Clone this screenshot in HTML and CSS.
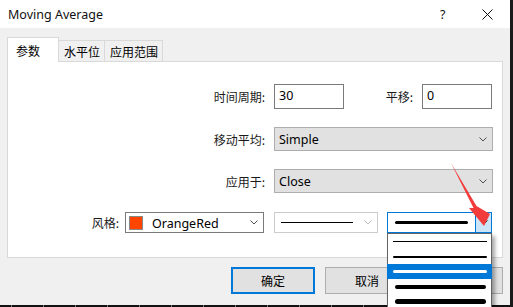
FILE: index.html
```html
<!DOCTYPE html>
<html>
<head>
<meta charset="utf-8">
<link rel="stylesheet" href="styles.css">
</head>
<body>
<div class="win">
  <div class="titlebar">
    <span class="title">Moving Average</span>
    <span class="help">?</span>
    <span class="close"><svg width="11" height="11" viewBox="0 0 11 11"><path d="M0.5 0.5 L10.5 10.5 M10.5 0.5 L0.5 10.5" stroke="#111" stroke-width="1" fill="none"/></svg></span>
  </div>
  <div class="body">
    <div class="tabs">
      <div class="tab active">参数</div>
      <div class="tab">水平位</div>
      <div class="tab">应用范围</div>
    </div>
    <div class="panel">
      <div class="row r1">
        <label class="lbl">时间周期:</label>
        <div class="input">30</div>
        <label class="lbl lbl2">平移:</label>
        <div class="input">0</div>
      </div>
      <div class="row r2">
        <label class="lbl">移动平均:</label>
        <div class="select"><span>Simple</span><svg class="chev" width="8" height="5" viewBox="0 0 8 5"><polyline points="0.5,0.5 4,4 7.5,0.5" fill="none" stroke="#505050" stroke-width="1"/></svg></div>
      </div>
      <div class="row r3">
        <label class="lbl">应用于:</label>
        <div class="select"><span>Close</span><svg class="chev" width="8" height="5" viewBox="0 0 8 5"><polyline points="0.5,0.5 4,4 7.5,0.5" fill="none" stroke="#505050" stroke-width="1"/></svg></div>
      </div>
      <div class="row r4">
        <label class="lbl lbl-style">风格:</label>
        <div class="combo color">
          <span class="swatch"></span><span class="ctext">OrangeRed</span>
          <svg class="chev" width="8" height="5" viewBox="0 0 8 5"><polyline points="0.5,0.5 4,4 7.5,0.5" fill="none" stroke="#505050" stroke-width="1"/></svg>
        </div>
        <div class="combo linesel">
          <span class="line l1"></span>
          <svg class="chev" width="8" height="5" viewBox="0 0 8 5"><polyline points="0.5,0.5 4,4 7.5,0.5" fill="none" stroke="#b4b4b4" stroke-width="1"/></svg>
        </div>
        <div class="combo widthsel">
          <span class="wline"><span class="line l3"></span></span>
          <span class="dbtn"><svg width="8" height="5" viewBox="0 0 8 5"><polyline points="0.5,0.5 4,4 7.5,0.5" fill="none" stroke="#303030" stroke-width="1"/></svg></span>
        </div>
      </div>
    </div>
    <div class="buttons">
      <div class="btn default">确定</div>
      <div class="btn">取消</div>
      <div class="btn">重置</div>
    </div>
  </div>
  <div class="strip"></div>

  <div class="dropdown">
    <div class="item"><span class="dl w1"></span></div>
    <div class="item"><span class="dl w2"></span></div>
    <div class="item sel"><span class="dl w3"></span></div>
    <div class="item"><span class="dl w4"></span></div>
    <div class="item"><span class="dl w5"></span></div>
  </div>

  <svg class="arrow" width="60" height="80" viewBox="440 155 60 80">
    <polygon points="451,163 476.5,206 490,214 484,226 469,208 473.5,208" fill="#f23b3b"/>
  </svg>
</div>
</body>
</html>
```

FILE: styles.css
```css
* { box-sizing: border-box; }
html, body { margin: 0; padding: 0; }
body {
  width: 513px;
  height: 307px;
  overflow: hidden;
  background: #1a1a1a;
  font-family: "Noto Sans", "Noto Sans CJK SC", sans-serif;
  font-size: 12px;
  color: #000;
}
.win {
  position: relative;
  width: 510px;
  height: 307px;
  display: flex;
  flex-direction: column;
}
.titlebar {
  height: 28px;
  background: #fff;
  display: flex;
  align-items: center;
  padding-left: 8px;
}
.title {
  font-size: 12.5px;
  flex: 1;
  color: #111;
}
.help {
  font-size: 12.5px;
  width: 10px;
  margin-right: 32px;
  color: #111;
}
.close {
  width: 11px;
  height: 11px;
  margin-right: 17px;
  display: flex;
}
.body {
  height: 277px;
  background: #f0f0f0;
  display: flex;
  flex-direction: column;
}
.tabs {
  display: flex;
  align-items: flex-end;
  padding-left: 7px;
  padding-top: 9px;
  height: 33px;
}
.tab {
  height: 21px;
  border: 1px solid #d9d9d9;
  border-bottom: none;
  padding: 0 4px 0 5px;
  margin-left: -1px;
  display: flex;
  align-items: center;
  font-family: "Noto Sans CJK SC", sans-serif;
  font-size: 12px;
  background: #f0f0f0;
}
.tab.active {
  margin-left: 0;
  width: 52px;
  height: 25px;
  background: #fff;
  padding-left: 8px;
  position: relative;
  z-index: 2;
  margin-bottom: -1px;
}
.tab:nth-child(2) { width: 47px; }
.tab:nth-child(3) { width: 59px; }
.panel {
  margin: 0 7px;
  height: 197px;
  background: #fff;
  border: 1px solid #d9d9d9;
  padding-top: 22px;
  display: flex;
  flex-direction: column;
}
.row {
  display: flex;
  align-items: center;
}
.r1 { height: 25px; margin-bottom: 18px; }
.r2 { height: 24px; margin-bottom: 18px; }
.r3 { height: 24px; margin-bottom: 19px; }
.r4 { height: 21px; }
.lbl {
  width: 257px;
  text-align: right;
  margin-right: 9px;
  font-family: "Noto Sans CJK SC", sans-serif;
  font-size: 12px;
  color: #1a1a1a;
}
.lbl2 { width: 69px; }
.lbl-style { width: 111px; margin-right: 6px; }
.input {
  width: 70px;
  height: 25px;
  border: 1px solid #7a7a7a;
  padding: 2px 0 0 4px;
  font-size: 12.5px;
  line-height: 17px;
}
.select {
  width: 219px;
  height: 24px;
  background: #e1e1e1;
  border: 1px solid #adadad;
  display: flex;
  align-items: center;
  padding: 0 5px 0 4px;
  font-size: 12.5px;
}
.select span { flex: 1; }
.chev { display: block; }
.combo {
  height: 21px;
  display: flex;
  align-items: center;
  background: #fff;
}
.color {
  width: 139px;
  border: 1px solid #7a7a7a;
  padding: 0 5px 0 3px;
  margin-right: 10px;
}
.swatch {
  width: 14px;
  height: 14px;
  background: #ff4500;
  border: 1px solid #8a8a8a;
  margin-right: 9px;
}
.ctext {
  flex: 1;
  font-size: 12.5px;
  line-height: 17px;
  padding-top: 1px;
}
.linesel {
  width: 104px;
  border: 1px solid #cccccc;
  padding: 0 5px 0 6px;
  margin-right: 9px;
}
.line {
  display: block;
  background: #000;
}
.linesel .l1 {
  width: 74px;
  height: 1px;
  margin-right: 11px;
}
.widthsel {
  width: 105px;
  border: 1px solid #0078d7;
  align-items: stretch;
}
.wline {
  flex: 1;
  display: flex;
  align-items: center;
  padding-left: 7px;
}
.l3 {
  width: 73px;
  height: 3px;
  border-radius: 2px;
}
.dbtn {
  width: 16px;
  background: #cce4f7;
  border-left: 1px solid #0078d7;
  display: flex;
  align-items: center;
  justify-content: center;
}
.buttons {
  display: flex;
  justify-content: flex-end;
  gap: 10px;
  padding-right: 7px;
  margin-top: 9px;
}
.btn {
  width: 84px;
  height: 27px;
  background: #e1e1e1;
  border: 1px solid #adadad;
  display: flex;
  align-items: center;
  justify-content: center;
  font-family: "Noto Sans CJK SC", sans-serif;
  font-size: 12px;
}
.btn.default { border: 2px solid #0078d7; }
.strip {
  height: 2px;
  background: #111 repeating-linear-gradient(90deg, transparent 0 11px, #777 11px 12px, transparent 12px 32px);
}
.dropdown {
  position: absolute;
  left: 387px;
  top: 233px;
  width: 105px;
  height: 80px;
  background: #fff;
  border: 1px solid #646464;
  box-shadow: 3px 3px 4px rgba(0, 0, 0, 0.35);
  z-index: 5;
}
.item {
  height: 15px;
  display: flex;
  align-items: center;
  padding-left: 5px;
}
.item.sel { background: #0078d7; margin: 0 -1px; padding-left: 6px; }
.dl {
  display: block;
  width: 94px;
  background: #000;
  border-radius: 3px;
}
.w1 { height: 1px; border-radius: 0; }
.w2 { height: 2px; }
.w3 { height: 3px; background: #fff; }
.w4 { height: 4px; margin-left: 2px; width: 91px; }
.w5 { height: 5px; margin-left: 2px; width: 91px; }
.arrow {
  position: absolute;
  left: 440px;
  top: 155px;
  z-index: 6;
}
```
